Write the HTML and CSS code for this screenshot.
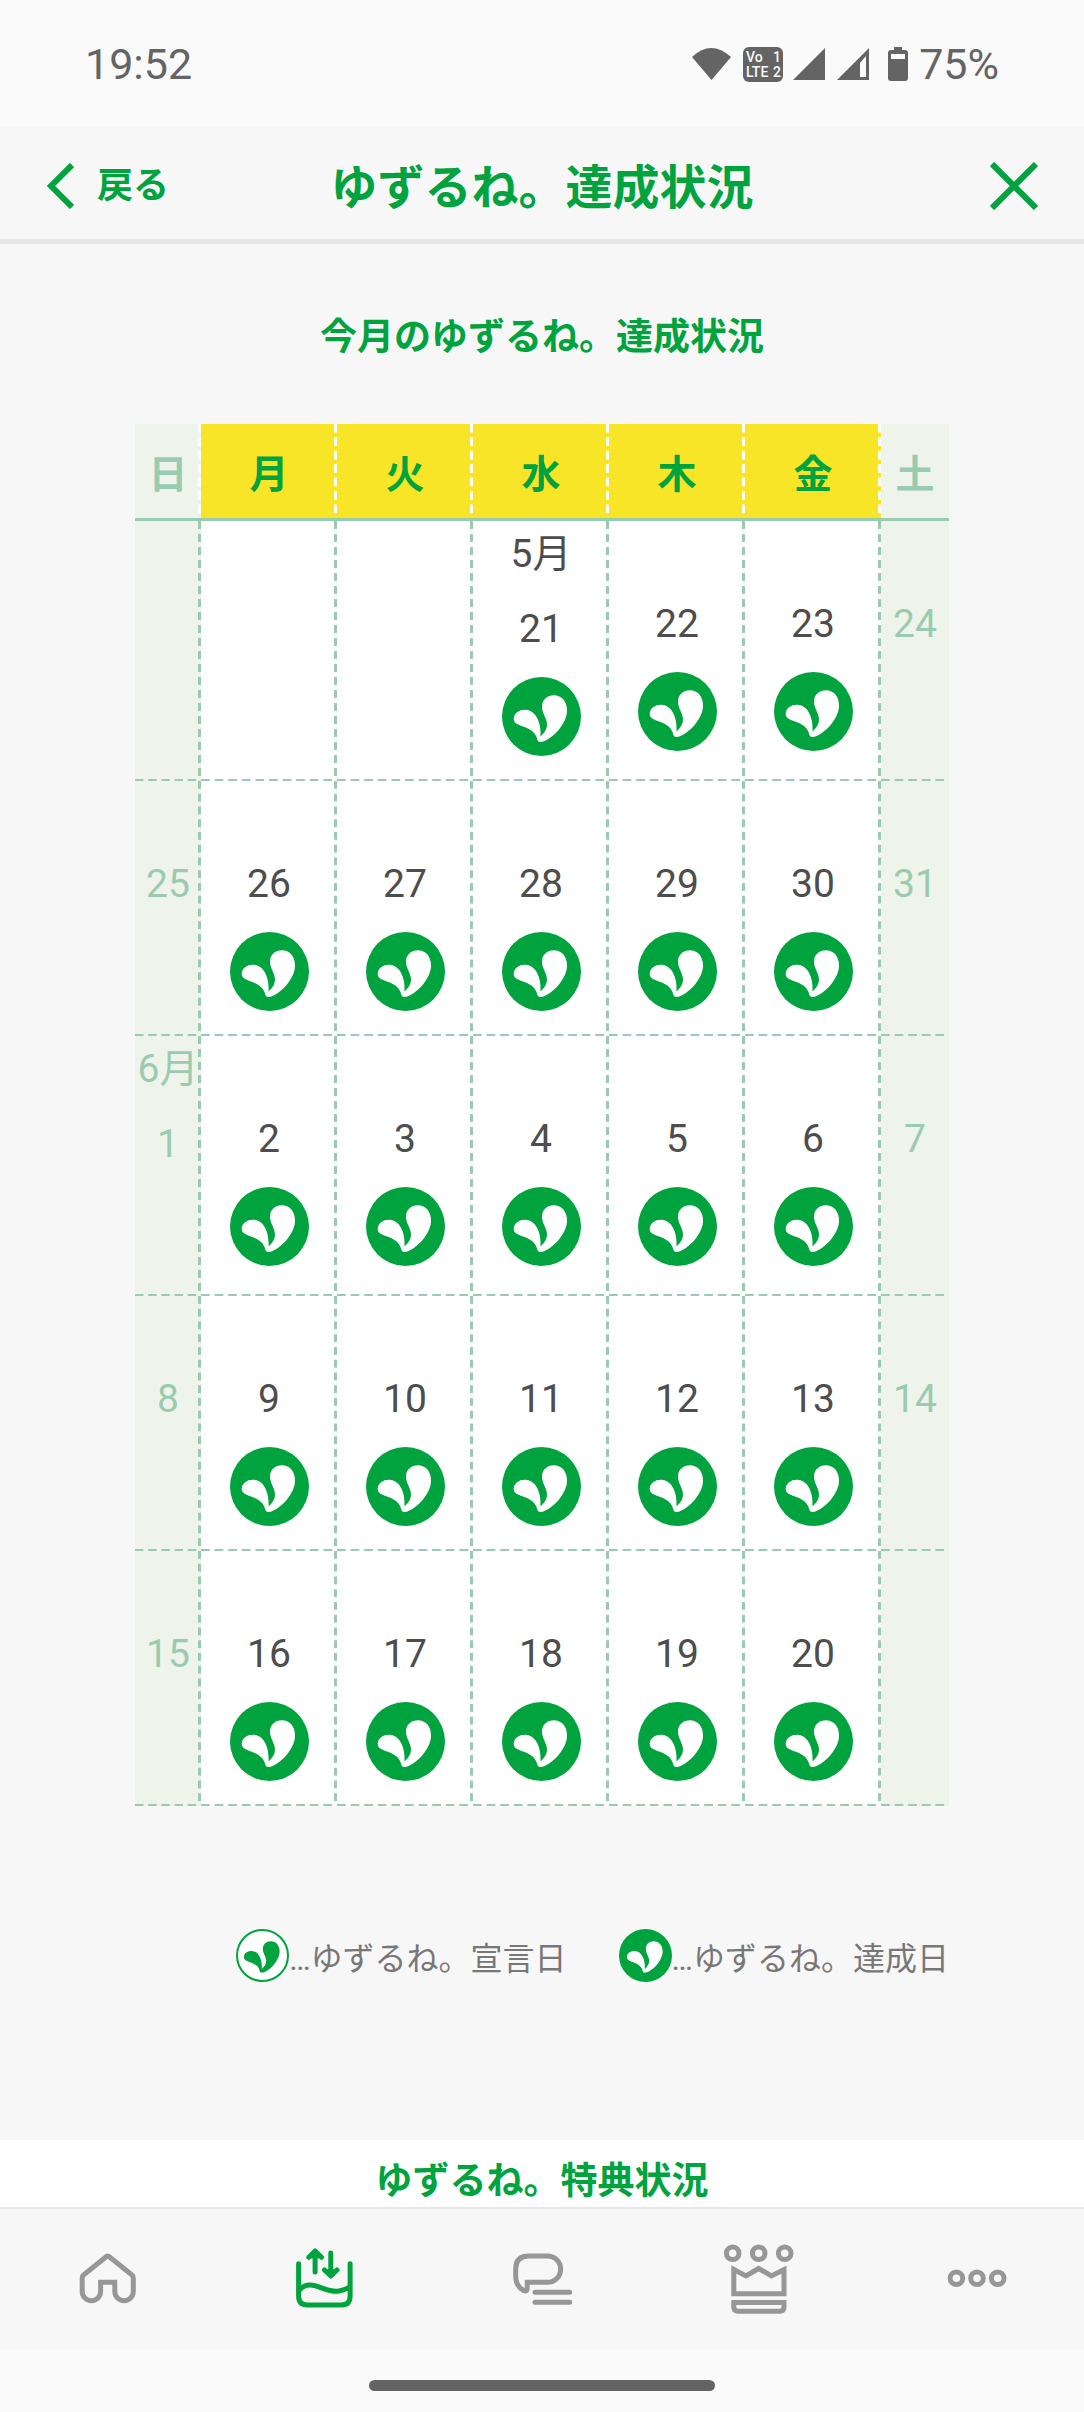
FILE: index.html
```html
<!DOCTYPE html>
<html lang="ja">
<head>
<meta charset="utf-8">
<meta name="viewport" content="width=device-width, initial-scale=1">
<title>ゆずるね。達成状況</title>
<link rel="stylesheet" href="styles.css">
</head>
<body>
<svg class="defs" aria-hidden="true">
  <symbol id="leaf" viewBox="0 0 79 79">
    <path d="M39 65C36.500 65.500 35.500 64 35 61.500C33.500 55 27 51.500 21 49.500C15.500 47.700 11.500 46 11.700 41.500C12 36 17 32.500 23.500 32.700C34 33 39.500 46 38.500 59.500C44 54.500 46.500 49.500 44 42.500C42 37 40 34.500 40 29.500C40 23 45 18.300 52 18.300C59.500 18.300 65.500 24.500 65 34.500C64.300 48.500 48 64 39 65Z"/>
  </symbol>
  <symbol id="done" viewBox="0 0 79 79">
    <circle cx="39.500" cy="39.500" r="39.500" fill="#00a33e"/>
    <use href="#leaf" fill="#fff"/>
  </symbol>
  <symbol id="declared" viewBox="0 0 79 79">
    <circle cx="39.500" cy="39.500" r="38" fill="#fff" stroke="#00a33e" stroke-width="3"/>
    <use href="#leaf" fill="#00a33e"/>
  </symbol>
</svg>

<div class="status">
  <span class="time">19:52</span>
  <div class="indicators">
    <svg width="217" height="36" viewBox="0 0 217 36" fill="#646464" aria-hidden="true">
      <path d="M0 11Q19-7 39 11L19.500 34Z"/>
      <rect x="51" y="1" width="40" height="35" rx="6"/>
      <g fill="#fafafa" font-family="Roboto, sans-serif" font-size="14" font-weight="500">
        <text x="54" y="16">Vo</text><text x="81" y="16">1</text>
        <text x="54" y="31">LTE</text><text x="81" y="31">2</text>
      </g>
      <path d="M133 2V34H101Z"/>
      <path fill-rule="evenodd" d="M177 2V34H145ZM174 10L168 17V31H174Z"/>
      <path fill-rule="evenodd" d="M202 1H210V4H213Q216 4 216 7V32Q216 35 213 35H199Q196 35 196 32V7Q196 4 199 4H202ZM199 8V13H213V8Z"/>
    </svg>
    <span class="battery">75%</span>
  </div>
</div>

<header class="header">
  <button class="back" type="button">
    <svg width="28" height="46" viewBox="0 0 28 46" fill="none" stroke="#00a33e" stroke-width="6" aria-hidden="true"><path d="M26 2L5 23L26 44"/></svg>
    戻る
  </button>
  <h1 class="title">ゆずるね。達成状況</h1>
  <button class="close" type="button" aria-label="閉じる">
    <svg width="48" height="48" viewBox="0 0 48 48" fill="none" stroke="#00a33e" stroke-width="6" aria-hidden="true"><path d="M2 2L46 46M46 2L2 46"/></svg>
  </button>
</header>

<main class="main">
  <h2 class="heading">今月のゆずるね。達成状況</h2>
  <table class="calendar">
    <colgroup><col class="sunday"><col><col><col><col><col><col class="saturday"></colgroup>
    <thead>
      <tr><th scope="col">日</th><th scope="col">月</th><th scope="col">火</th><th scope="col">水</th><th scope="col">木</th><th scope="col">金</th><th scope="col">土</th></tr>
    </thead>
    <tbody>
      <tr>
        <td></td><td></td><td></td>
        <td><span class="month">5月</span><span class="date">21</span><svg class="mark"><use href="#done"/></svg></td>
        <td><span class="date">22</span><svg class="mark"><use href="#done"/></svg></td>
        <td><span class="date">23</span><svg class="mark"><use href="#done"/></svg></td>
        <td><span class="date">24</span></td>
      </tr>
      <tr>
        <td><span class="date">25</span></td>
        <td><span class="date">26</span><svg class="mark"><use href="#done"/></svg></td>
        <td><span class="date">27</span><svg class="mark"><use href="#done"/></svg></td>
        <td><span class="date">28</span><svg class="mark"><use href="#done"/></svg></td>
        <td><span class="date">29</span><svg class="mark"><use href="#done"/></svg></td>
        <td><span class="date">30</span><svg class="mark"><use href="#done"/></svg></td>
        <td><span class="date">31</span></td>
      </tr>
      <tr>
        <td><span class="month">6月</span><span class="date">1</span></td>
        <td><span class="date">2</span><svg class="mark"><use href="#done"/></svg></td>
        <td><span class="date">3</span><svg class="mark"><use href="#done"/></svg></td>
        <td><span class="date">4</span><svg class="mark"><use href="#done"/></svg></td>
        <td><span class="date">5</span><svg class="mark"><use href="#done"/></svg></td>
        <td><span class="date">6</span><svg class="mark"><use href="#done"/></svg></td>
        <td><span class="date">7</span></td>
      </tr>
      <tr>
        <td><span class="date">8</span></td>
        <td><span class="date">9</span><svg class="mark"><use href="#done"/></svg></td>
        <td><span class="date">10</span><svg class="mark"><use href="#done"/></svg></td>
        <td><span class="date">11</span><svg class="mark"><use href="#done"/></svg></td>
        <td><span class="date">12</span><svg class="mark"><use href="#done"/></svg></td>
        <td><span class="date">13</span><svg class="mark"><use href="#done"/></svg></td>
        <td><span class="date">14</span></td>
      </tr>
      <tr>
        <td><span class="date">15</span></td>
        <td><span class="date">16</span><svg class="mark"><use href="#done"/></svg></td>
        <td><span class="date">17</span><svg class="mark"><use href="#done"/></svg></td>
        <td><span class="date">18</span><svg class="mark"><use href="#done"/></svg></td>
        <td><span class="date">19</span><svg class="mark"><use href="#done"/></svg></td>
        <td><span class="date">20</span><svg class="mark"><use href="#done"/></svg></td>
        <td></td>
      </tr>
    </tbody>
  </table>
  <ul class="legend">
    <li><svg class="key"><use href="#declared"/></svg>…ゆずるね。宣言日</li>
    <li><svg class="key"><use href="#done"/></svg>…ゆずるね。達成日</li>
  </ul>
</main>

<section class="benefits">
  <h2 class="heading">ゆずるね。特典状況</h2>
</section>

<nav class="nav">
  <a href="#" aria-label="ホーム"><svg width="80" height="80" viewBox="0 0 80 80"><path d="M38.500 17.500Q39.700 16.500 41 17.500L64 36Q65.300 37 65.300 39V52.500A9.200 9.200 0 0 1 46.800 52.500V43.200H32.600V52.500A9.200 9.200 0 0 1 14.200 52.500V39Q14.200 37 15.500 36Z"/></svg></a>
  <a href="#" class="active" aria-label="ゆずるね。"><svg width="80" height="80" viewBox="0 0 80 80"><path stroke-linecap="round" stroke-linejoin="round" d="M13.600 24.700V57Q13.600 66 22.500 66H56.500Q65.100 66 65.100 57V24.700M14.500 51C26 38 40 55 54 52Q60 51 64.500 48M30.100 33V12.500M23.800 18.300L30.100 12L36.500 18.300M27.500 17H32.700M45.800 14V36.500M39.500 31L45.800 37L52 31M43.200 32.500H48.400"/></svg></a>
  <a href="#" aria-label="メッセージ"><svg width="80" height="80" viewBox="0 0 80 80"><path stroke-linecap="round" d="M33 53.300H67.700M33 63.300H67.700"/><path d="M25.200 43.300H45.500A13.100 13.100 0 0 0 45.500 17H26.500Q13.700 17 13.700 30V37Q13.700 47.500 22 51.700Q25.200 52.800 25.200 49Z"/></svg></a>
  <a href="#" aria-label="ランキング"><svg width="80" height="80" viewBox="0 0 80 80"><circle cx="13.700" cy="14.300" r="6.300"/><circle cx="39.700" cy="14.300" r="6.300"/><circle cx="65.700" cy="14.300" r="6.300"/><path d="M14.800 30.500L27 37L39.700 29.500L52.500 37L65 30.500V54.700H14.800ZM14.800 63.500H65V68Q65 72.300 61 72.300H19Q14.800 72.300 14.800 68Z"/></svg></a>
  <a href="#" aria-label="その他"><svg width="80" height="80" viewBox="0 0 80 80"><circle cx="20.400" cy="39.300" r="6.300"/><circle cx="41" cy="39.300" r="6.300"/><circle cx="61.700" cy="39.300" r="6.300"/></svg></a>
</nav>
<div class="gesture"><div class="pill"></div></div>
</body>
</html>
```
FILE: styles.css
```css
* {
  box-sizing: border-box;
}

body {
  margin: 0;
  background: #f7f7f7;
  color: #4d4d4d;
  font-family: Roboto, "Noto Sans CJK JP", sans-serif;
}

.defs {
  display: none;
}

.status {
  display: flex;
  align-items: center;
  justify-content: space-between;
  height: 127px;
  padding: 0 85px;
  background: #fafafa;
  color: #646464;
  font-size: 43px;
}

.indicators {
  display: flex;
  align-items: center;
  gap: 10px;
}

.header {
  display: grid;
  grid-template-columns: 1fr auto 1fr;
  align-items: center;
  height: 117px;
  padding: 6px 46px 0;
  border-bottom: 5px solid #e5e5e5;
  color: #00a33e;
}

.back,
.close {
  display: flex;
  align-items: center;
  padding: 0;
  border: 0;
  background: none;
  color: inherit;
  font: 700 36px/52px Roboto, "Noto Sans CJK JP", sans-serif;
}

.back {
  justify-self: start;
  gap: 23px;
}

.close {
  justify-self: end;
}

.title {
  margin: 0;
  padding-top: 4px;
  font-size: 47px;
  font-weight: 700;
  line-height: 70px;
}

.main {
  padding: 69px 135px 158px;
}

.heading {
  margin: 0;
  color: #00a33e;
  font-size: 37px;
  font-weight: 700;
  line-height: 50px;
  text-align: center;
}

.calendar {
  width: 100%;
  margin-top: 61px;
  border-spacing: 0;
  table-layout: fixed;
  font-size: 39px;
  text-align: center;
}

.sunday {
  width: 66px;
}

.saturday {
  width: 68px;
}

/* Dashed rules are 8px strokes with 5px gaps, fitted to each cell. */
th {
  height: 97px;
  padding: 0;
  border-bottom: 3px solid #9acbb0;
  background: linear-gradient(#fff 62%, transparent 62%) right top / 3px 13px no-repeat round #f9e528;
  color: #00a33e;
  font-weight: 700;
}

td {
  height: 255px;
  padding: 74px 0 0;
  background:
    linear-gradient(#9acbb0 62%, transparent 62%) right top / 3px 13px no-repeat round,
    linear-gradient(90deg, #9acbb0 62%, transparent 62%) left bottom / 13px 2px round no-repeat
    #fff;
  vertical-align: top;
}

td:has(.month) {
  height: 260px;
  padding-top: 0;
}

th:first-child,
th:last-child,
td:first-child,
td:last-child {
  background-color: #eef4e9;
  color: #9acbb0;
}

th:last-child {
  background-image: none;
}

td:last-child {
  background-image: linear-gradient(90deg, #9acbb0 62%, transparent 62%);
  background-position: left bottom;
  background-size: 13px 2px;
  background-repeat: round no-repeat;
}

.month {
  display: block;
  height: 79px;
  line-height: 66px;
  white-space: nowrap;
}

.date {
  display: block;
  line-height: 58px;
}

.mark {
  display: block;
  width: 79px;
  height: 79px;
  margin: 19px auto 0;
}

.legend {
  display: flex;
  justify-content: flex-end;
  gap: 52px;
  margin: 123px 0 0;
  padding: 0;
  color: #777;
  font-size: 32px;
  list-style: none;
}

.legend li {
  display: flex;
  align-items: center;
  white-space: nowrap;
}

.key {
  width: 53px;
  height: 53px;
}

.benefits {
  padding-top: 17px;
  background: #fff;
}

.nav {
  display: grid;
  grid-template-columns: repeat(5, 1fr);
  align-items: center;
  height: 142px;
  border-top: 2px solid #e8e8e8;
}

.nav a {
  display: flex;
  justify-content: center;
}

.nav svg {
  fill: none;
  stroke: #979797;
  stroke-width: 5;
}

.nav .active svg {
  stroke: #00a33e;
}

.gesture {
  display: flex;
  justify-content: center;
  padding: 31px 0 21px;
  background: #fafafa;
}

.pill {
  width: 32%;
  height: 11px;
  border-radius: 6px;
  background: #646464;
}
```
